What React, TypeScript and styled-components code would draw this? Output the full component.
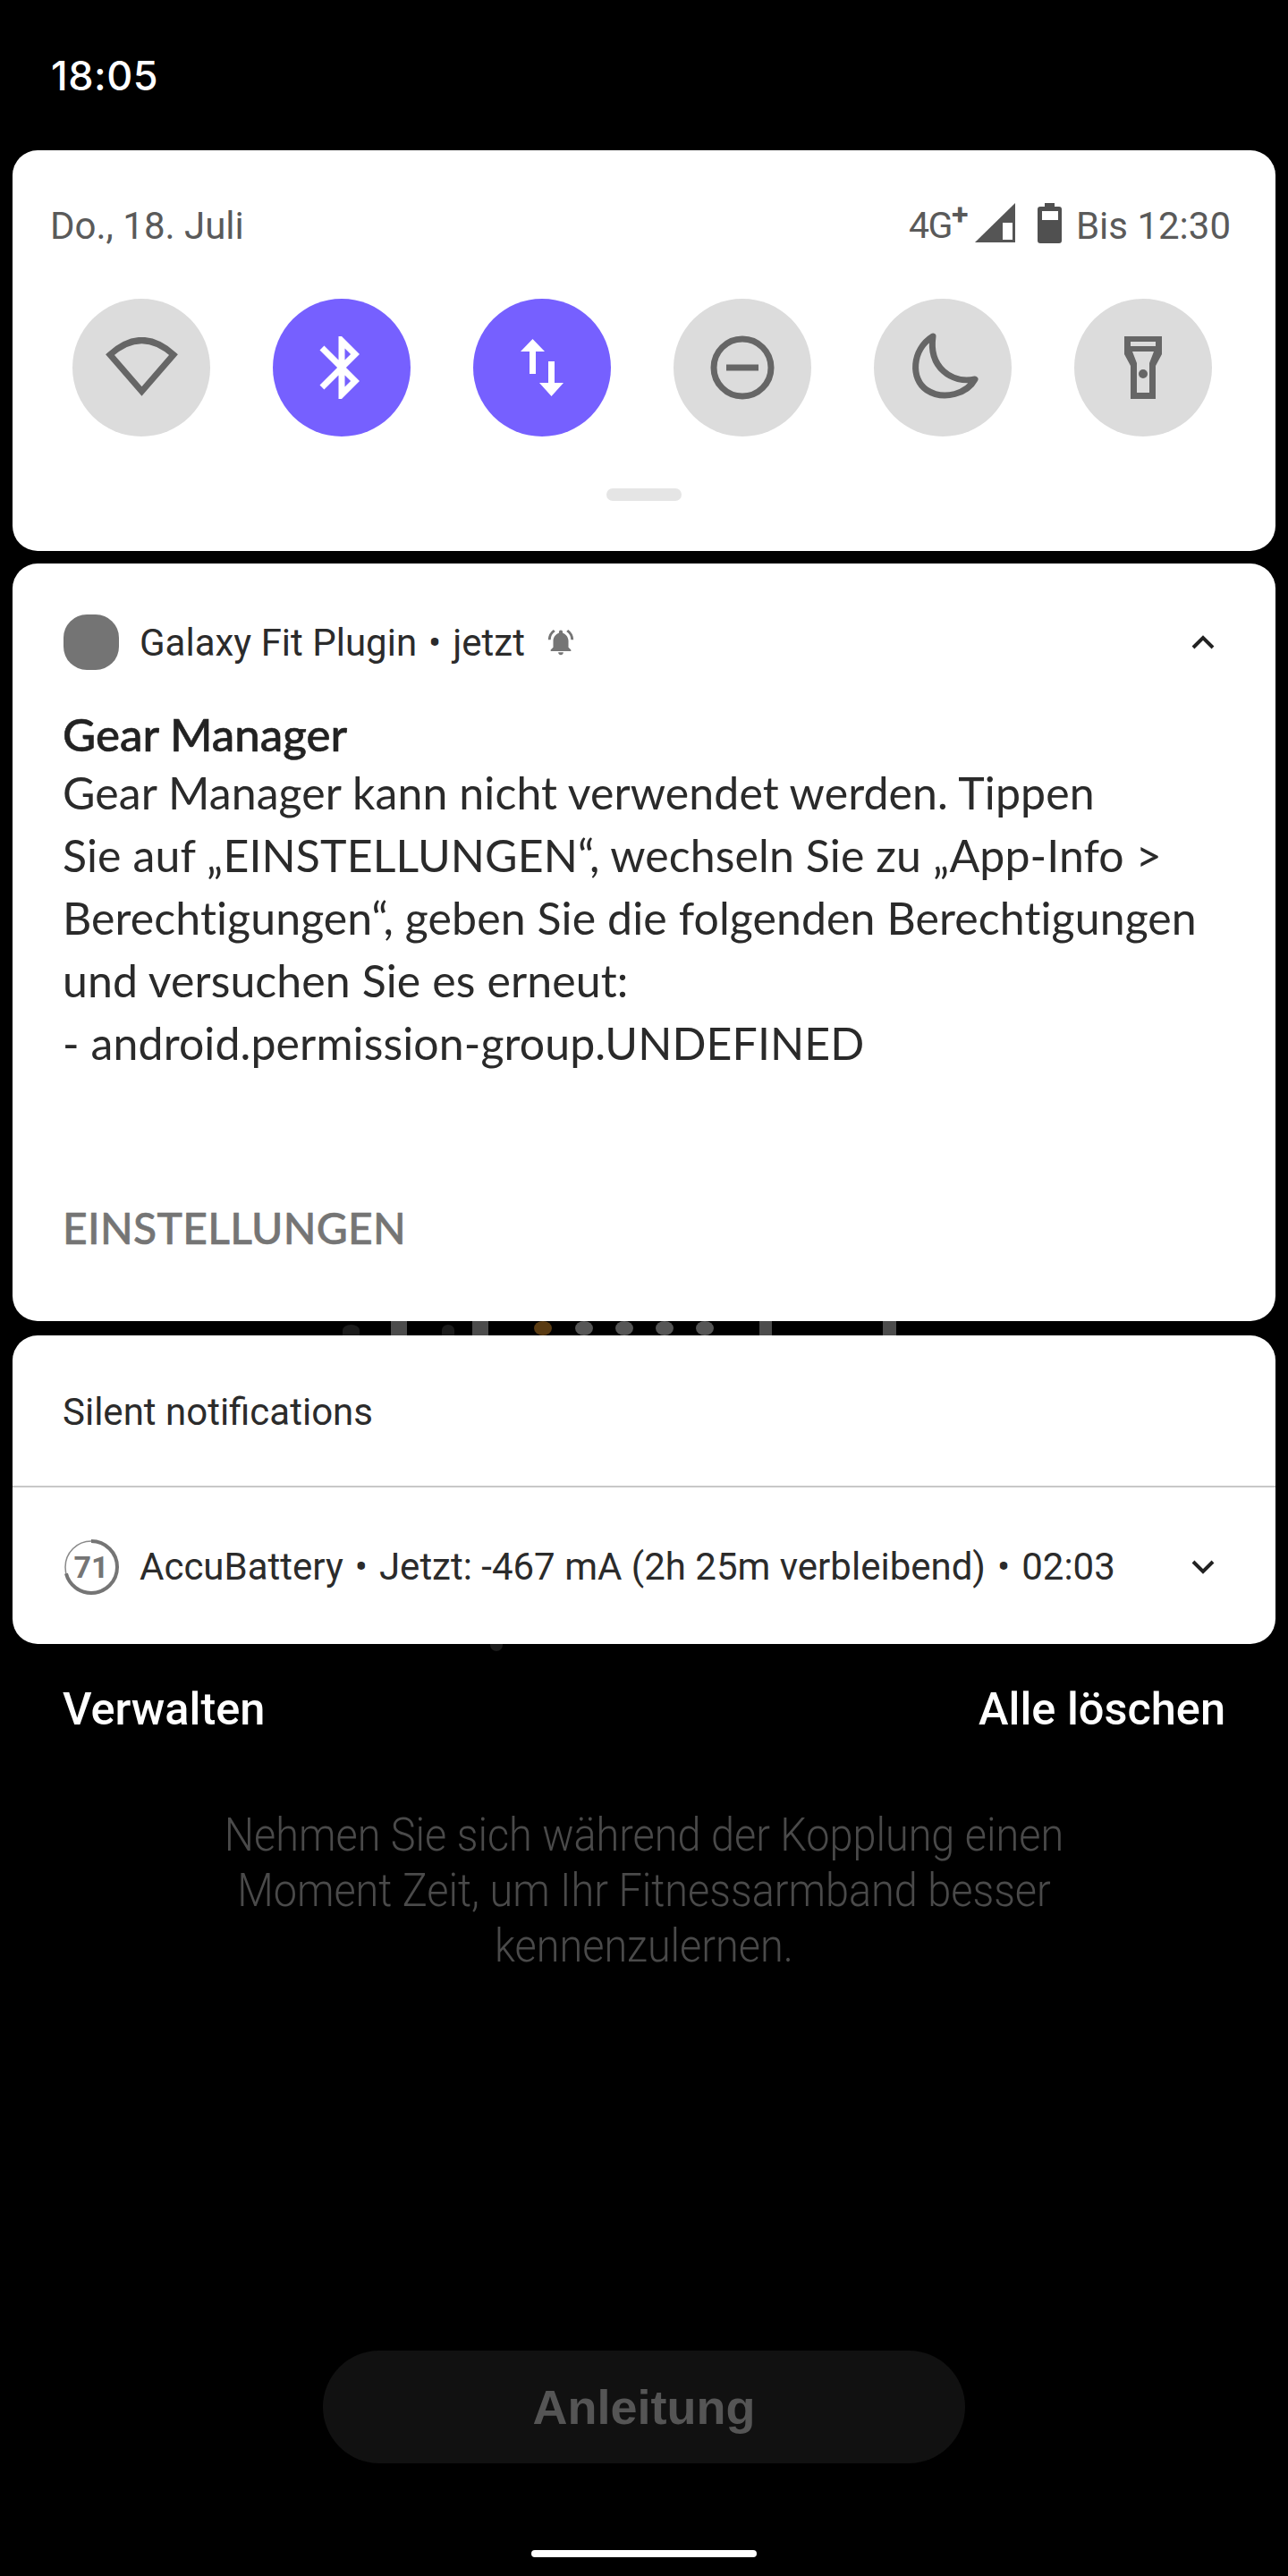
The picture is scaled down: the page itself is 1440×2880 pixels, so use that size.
import React from "react";
import styled, { createGlobalStyle } from "styled-components";

const Global = createGlobalStyle`
  html, body { margin: 0; padding: 0; background: #000; }
  * { box-sizing: border-box; }
`;

const Page = styled.div`
  width: 1440px;
  height: 2880px;
  background: #000;
  display: flex;
  flex-direction: column;
  font-family: Roboto, "Liberation Sans", sans-serif;
  overflow: hidden;
`;

const Clock = styled.div`
  height: 168px;
  padding: 61px 0 0 57px;
  color: #fff;
  font-size: 45px;
  line-height: 48px;
  font-weight: 500;
  font-family: Inter, Roboto, sans-serif;
  letter-spacing: 0.5px;
`;

const Card = styled.section`
  margin: 0 14px;
  background: #fff;
  border-radius: 28px;
`;

const QuickPanel = styled(Card)`
  height: 448px;
  padding: 61px 42px 0;
  display: flex;
  flex-direction: column;
`;

const QuickTop = styled.div`
  display: flex;
  justify-content: space-between;
  align-items: center;
  height: 46px;
  padding: 0 8px 0 0;
  font-size: 42px;
  font-weight: 400;
  color: #5a5a5a;
`;

const StatusGroup = styled.div`
  display: flex;
  align-items: center;
`;

const NetLabel = styled.span`
  font-size: 41px;
  letter-spacing: -1.5px;
  margin-right: 9px;
`;

const Plus = styled.sup`
  font-size: 34px;
  line-height: 0;
  font-weight: 700;
`;

const SignalIcon = styled.svg`
  margin-right: 25px;
  margin-top: -6px;
`;

const BatteryIcon = styled.svg`
  margin-right: 16px;
  margin-top: -6px;
`;

const TileRow = styled.div`
  display: flex;
  gap: 70px;
  margin: 59px 0 0 25px;
`;

const Tile = styled.div<{ $on?: boolean }>`
  width: 154px;
  height: 154px;
  flex: none;
  border-radius: 50%;
  background: ${(p) => (p.$on ? "#7660ff" : "#dcdcdc")};
  display: flex;
  align-items: center;
  justify-content: center;
`;

const Handle = styled.div`
  width: 84px;
  height: 14px;
  margin: 58px auto 0;
  border-radius: 7px;
  background: #e5e5e5;
`;

const Gap = styled.div<{ $h: number; $at?: number }>`
  height: ${(p) => p.$h}px;
  flex: none;
  display: flex;
  align-items: flex-end;
  padding-left: ${(p) => p.$at ?? 0}px;
`;

const Mark = styled.span<{ $kind: "bar" | "dot" | "amber" | "blob" }>`
  flex: none;
  height: ${(p) => (p.$kind === "blob" ? "12px" : "100%")};
  border-radius: ${(p) => (p.$kind === "bar" ? "0" : p.$kind === "blob" ? "50% 50% 0 0" : "50%")};
  background: ${(p) =>
    p.$kind === "bar" ? "#4c4c4c" : p.$kind === "amber" ? "#5a3b12" : p.$kind === "blob" ? "#1b1b1b" : "#565656"};
`;

const NotifCard = styled(Card)`
  height: 847px;
  padding: 0 56px;
  display: flex;
  flex-direction: column;
`;

const NotifHead = styled.div`
  display: flex;
  align-items: center;
  height: 62px;
  margin-top: 57px;
  gap: 23px;
  color: #2b2b2b;
  font-size: 42px;
  font-weight: 400;
`;

const AppIcon = styled.div`
  width: 62px;
  height: 62px;
  margin-left: 1px;
  flex: none;
  background: #747474;
  border-radius: 42%;
`;

const HeadText = styled.span`
  white-space: nowrap;
`;

const Dot = styled.span`
  margin: 0 13px;
`;

const Chevron = styled.svg`
  margin-left: auto;
  margin-right: 12px;
  flex: none;
`;

const Title = styled.h2`
  margin: 44px 0 0;
  font-size: 51px;
  line-height: 56px;
  font-weight: 500;
  color: #222;
  -webkit-text-stroke: 0.6px #222;
  font-family: Lato, Roboto, sans-serif;
`;

const Body = styled.p`
  margin: 2px 0 0;
  font-size: 50px;
  line-height: 70px;
  letter-spacing: 0.1px;
  color: #2a2a2a;
  font-family: Lato, Roboto, sans-serif;
`;

const Action = styled.div`
  margin: 144px 0 0;
  color: #757575;
  font-size: 48px;
  line-height: 56px;
  font-weight: 500;
  letter-spacing: 0.3px;
  -webkit-text-stroke: 0.6px #757575;
  font-family: Lato, Roboto, sans-serif;
`;

const SilentCard = styled(Card)`
  height: 345px;
  display: flex;
  flex-direction: column;
`;

const SilentHead = styled.div`
  height: 170px;
  border-bottom: 2px solid #c8c8c8;
  padding: 2px 0 0 56px;
  display: flex;
  align-items: center;
  color: #2b2b2b;
  font-size: 42px;
  font-weight: 400;
`;

const SilentRow = styled.div`
  flex: 1;
  display: flex;
  align-items: center;
  padding: 2px 56px 0 57px;
  gap: 23px;
  color: #2b2b2b;
  font-size: 42px;
  white-space: nowrap;
`;

const Footer = styled.div`
  display: flex;
  justify-content: space-between;
  padding: 38px 70px 0 70px;
  color: #fff;
  font-size: 50.5px;
  line-height: 54px;
  font-weight: 500;
`;

const Hint = styled.div`
  margin-top: 83px;
  text-align: center;
  color: #4a4a4a;
  font-size: 52px;
  line-height: 62px;
  font-weight: 300;
  transform: scaleX(0.9);
`;

const GuideButton = styled.div`
  width: 718px;
  height: 126px;
  margin: 421px auto 0;
  border-radius: 63px;
  background: #111;
  color: #555;
  font-size: 54px;
  font-weight: 700;
  font-family: "Liberation Sans", sans-serif;
  display: flex;
  align-items: center;
  justify-content: center;
`;

const NavBar = styled.div`
  width: 252px;
  height: 8px;
  margin: 97px auto 0;
  border-radius: 4px;
  background: #fff;
`;

const Grey = "#666";

const marks: { x: number; w: number; kind: "bar" | "dot" | "amber" | "blob" }[] = [
  { x: 383, w: 19, kind: "blob" },
  { x: 437, w: 18, kind: "bar" },
  { x: 494, w: 14, kind: "blob" },
  { x: 528, w: 18, kind: "bar" },
  { x: 597, w: 20, kind: "amber" },
  { x: 643, w: 20, kind: "dot" },
  { x: 688, w: 20, kind: "dot" },
  { x: 733, w: 20, kind: "dot" },
  { x: 778, w: 20, kind: "dot" },
  { x: 849, w: 14, kind: "bar" },
  { x: 987, w: 15, kind: "bar" },
];

const Stray = styled.span`
  width: 14px;
  height: 8px;
  border-radius: 0 0 7px 7px;
  background: #1b1b1b;
  align-self: flex-start;
`;

const App = () => (
  <Page>
    <Global />
    <Clock>18:05</Clock>
    <QuickPanel>
      <QuickTop>
        <span>Do., 18. Juli</span>
        <StatusGroup>
          <NetLabel>4G<Plus>+</Plus></NetLabel>
          <SignalIcon width="45" height="44" viewBox="0 0 45 44">
            <path d="M0 44 L45 0 V44 Z" fill="#555" />
            <rect x="31" y="22" width="11" height="19" fill="#fff" />
          </SignalIcon>
          <BatteryIcon width="27" height="45" viewBox="0 0 27 45">
            <rect x="8" y="0" width="11" height="6" fill="#505050" />
            <rect x="0" y="4" width="27" height="41" rx="3" fill="#505050" />
            <rect x="5" y="9" width="18" height="10" fill="#fff" />
          </BatteryIcon>
          <span>Bis 12:30</span>
        </StatusGroup>
      </QuickTop>
      <TileRow>
        <Tile>
          <svg width="83" height="68" viewBox="0 0 83 68">
            <path d="M41.5 60.500 L6 19.500 Q41.500 -12.500 77 19.500 Z" fill="none" stroke={Grey} strokeWidth="7" />
          </svg>
        </Tile>
        <Tile $on>
          <svg width="84" height="84" viewBox="0 0 24 24" fill="#fff">
            <path d="M17.710 7.710 12 2h-1v7.590L6.410 5 5 6.410 10.590 12 5 17.590 6.410 19 11 14.410V22h1l5.710-5.710-4.300-4.290 4.300-4.290zM13 5.830l1.880 1.880L13 9.590V5.830zm1.880 10.460L13 18.170v-3.760l1.880 1.880z" />
          </svg>
        </Tile>
        <Tile $on>
          <svg width="48" height="64" viewBox="0 0 48 64" fill="#fff">
            <path d="M13.500 0 L27 14 H17 V39 H10 V14 H0 Z M31 25 H38 V49 H48 L34.500 64 L21 49 H31 Z" />
          </svg>
        </Tile>
        <Tile>
          <svg width="72" height="72" viewBox="0 0 72 72">
            <circle cx="36" cy="36" r="32" fill="none" stroke={Grey} strokeWidth="7" />
            <rect x="18" y="32.500" width="36" height="7" fill={Grey} />
          </svg>
        </Tile>
        <Tile>
          <svg width="84" height="84" viewBox="0 0 84 84">
            <path d="M31 7 C7 22 6 55 24 67 C44 80 70 70 78 55 C52 60 26 42 31 7 Z" fill="none" stroke={Grey} strokeWidth="7" strokeLinejoin="round" />
          </svg>
        </Tile>
        <Tile>
          <svg width="42" height="70" viewBox="0 0 42 70" fill={Grey}>
            <path fillRule="evenodd" d="M0 0 H42 V20 L35 33 V70 H7 V33 L0 20 Z M7 6 H35 V11 H7 Z M9 17 H33 L28 30 V63 H14 V30 Z" />
            <circle cx="21" cy="42" r="5" />
          </svg>
        </Tile>
      </TileRow>
      <Handle />
    </QuickPanel>
    <Gap $h={14} />
    <NotifCard>
      <NotifHead>
        <AppIcon />
        <HeadText>Galaxy Fit Plugin<Dot>•</Dot>jetzt</HeadText>
        <svg width="34" height="34" viewBox="0 0 24 24" fill="#757575">
          <path d="M12 22a2 2 0 0 0 2-2h-4a2 2 0 0 0 2 2zm6-6v-5c0-3-2-5.600-4.500-6.300V4a1.500 1.500 0 0 0-3 0v.7C8 5.400 6 8 6 11v5l-2 2v1h16v-1zM7.600 3.600 6.200 2.200A10 10 0 0 0 2 10h2a8 8 0 0 1 3.600-6.400zM20 10h2a10 10 0 0 0-4.200-7.800l-1.400 1.400A8 8 0 0 1 20 10z" />
        </svg>
        <Chevron width="26" height="16" viewBox="0 0 26 16">
          <path d="M2 14 L13 3 L24 14" fill="none" stroke="#222" strokeWidth="4" />
        </Chevron>
      </NotifHead>
      <Title>Gear Manager</Title>
      <Body>
        Gear Manager kann nicht verwendet werden. Tippen<br />
        Sie auf „EINSTELLUNGEN“, wechseln Sie zu „App-Info &gt;<br />
        Berechtigungen“, geben Sie die folgenden Berechtigungen<br />
        und versuchen Sie es erneut:<br />
        - android.permission-group.UNDEFINED
      </Body>
      <Action>EINSTELLUNGEN</Action>
    </NotifCard>
    <Gap $h={16}>
      {marks.map((m, i) => (
        <Mark
          key={m.x}
          $kind={m.kind}
          style={{ width: m.w, marginLeft: i === 0 ? m.x : m.x - marks[i - 1].x - marks[i - 1].w }}
        />
      ))}
    </Gap>
    <SilentCard>
      <SilentHead>Silent notifications</SilentHead>
      <SilentRow>
        <svg width="62" height="62" viewBox="0 0 62 62">
          <circle cx="31" cy="31" r="29" fill="none" stroke="#8a8a8a" strokeWidth="1.500" />
          <circle cx="31" cy="31" r="29" fill="none" stroke="#757575" strokeWidth="4" strokeDasharray="129 182" transform="rotate(-90 31 31)" />
          <text x="31" y="43" textAnchor="middle" fontSize="34" fontWeight="700" fill="#757575" fontFamily="Roboto">71</text>
        </svg>
        <span>AccuBattery<Dot>•</Dot>Jetzt: -467 mA (2h 25m verbleibend)<Dot>•</Dot>02:03</span>
        <Chevron width="26" height="16" viewBox="0 0 26 16">
          <path d="M2 2 L13 13 L24 2" fill="none" stroke="#222" strokeWidth="4" />
        </Chevron>
      </SilentRow>
    </SilentCard>
    <Gap $h={8} $at={548}><Stray /></Gap>
    <Footer>
      <span>Verwalten</span>
      <span>Alle löschen</span>
    </Footer>
    <Hint>
      Nehmen Sie sich während der Kopplung einen<br />
      Moment Zeit, um Ihr Fitnessarmband besser<br />
      kennenzulernen.
    </Hint>
    <GuideButton>Anleitung</GuideButton>
    <NavBar />
  </Page>
);

export default App;
